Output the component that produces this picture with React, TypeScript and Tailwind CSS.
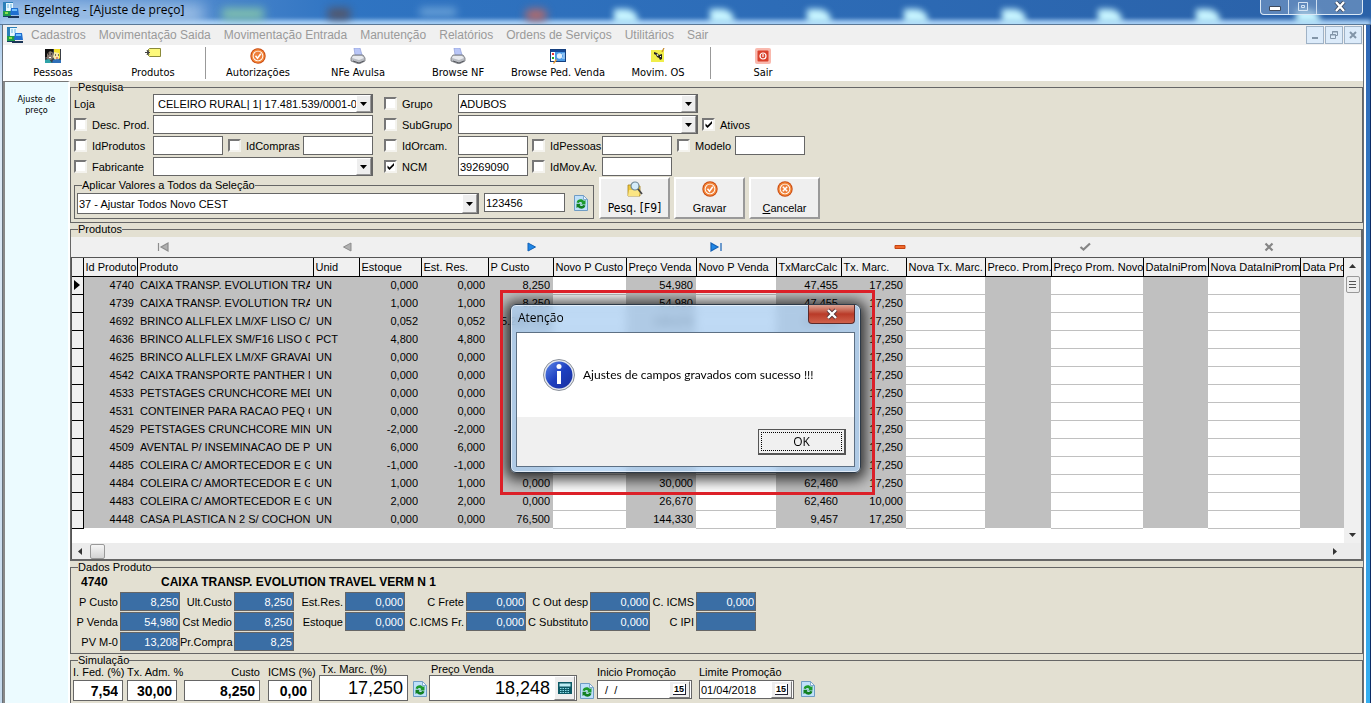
import type { ReactNode } from 'react';

type Column = {
  label: string;
  width: string;
  editable?: boolean;
  align?: 'right';
};

const COLUMNS: Column[] = [
  { label: 'Id Produto', width: 'w-[54px]', align: 'right' },
  { label: 'Produto', width: 'w-[176px]' },
  { label: 'Unid', width: 'w-[46px]' },
  { label: 'Estoque', width: 'w-[62px]', align: 'right' },
  { label: 'Est. Res.', width: 'w-[67px]', align: 'right' },
  { label: 'P Custo', width: 'w-[65px]', align: 'right' },
  { label: 'Novo P Custo', width: 'w-[73px]', editable: true },
  { label: 'Preço Venda', width: 'w-[70px]', align: 'right' },
  { label: 'Novo P Venda', width: 'w-[80px]', editable: true },
  { label: 'TxMarcCalc', width: 'w-[65px]', align: 'right' },
  { label: 'Tx. Marc.', width: 'w-[65px]', align: 'right' },
  { label: 'Nova Tx. Marc.', width: 'w-[79px]', editable: true },
  { label: 'Preco. Prom.', width: 'w-[66px]' },
  { label: 'Preço Prom. Novo', width: 'w-[92px]', editable: true },
  { label: 'DataIniProm', width: 'w-[65px]' },
  { label: 'Nova DataIniProm', width: 'w-[92px]', editable: true },
  { label: 'Data Prom.', width: '' },
];

// id, produto, unid, estoque, est. res., p custo, preço venda, tx calc, tx marc
const PRODUCTS = [
  ['4740', 'CAIXA TRANSP. EVOLUTION TRAVEL', 'UN', '0,000', '0,000', '8,250', '54,980', '47,455', '17,250'],
  ['4739', 'CAIXA TRANSP. EVOLUTION TRAVEL', 'UN', '1,000', '1,000', '8,250', '54,980', '47,455', '17,250'],
  ['4692', 'BRINCO ALLFLEX LM/XF LISO C/ 20', 'UN', '0,052', '0,052', '5.282,720', '128,670', '47,455', '17,250'],
  ['4636', 'BRINCO ALLFLEX SM/F16 LISO CX', 'PCT', '4,800', '4,800', '', '', '', '17,250'],
  ['4625', 'BRINCO ALLFLEX LM/XF GRAVADO', 'UN', '0,000', '0,000', '', '', '', '17,250'],
  ['4542', 'CAIXA TRANSPORTE PANTHER N 1', 'UN', '0,000', '0,000', '', '', '', '17,250'],
  ['4533', 'PETSTAGES CRUNCHCORE MEDIO', 'UN', '0,000', '0,000', '', '', '', '17,250'],
  ['4531', 'CONTEINER PARA RACAO PEQ C/', 'UN', '0,000', '0,000', '', '', '', '17,250'],
  ['4529', 'PETSTAGES CRUNCHCORE MINI', 'UN', '-2,000', '-2,000', '', '', '', '17,250'],
  ['4509', 'AVENTAL P/ INSEMINACAO DE PLAST', 'UN', '6,000', '6,000', '', '', '', '17,250'],
  ['4485', 'COLEIRA C/ AMORTECEDOR E GUIA', 'UN', '-1,000', '-1,000', '', '', '', '17,250'],
  ['4484', 'COLEIRA C/ AMORTECEDOR E GUIA', 'UN', '1,000', '1,000', '0,000', '30,000', '62,460', '17,250'],
  ['4483', 'COLEIRA C/ AMORTECEDOR E GUIA', 'UN', '2,000', '2,000', '0,000', '26,670', '62,460', '10,000'],
  ['4448', 'CASA PLASTICA N 2 S/ COCHONETE', 'UN', '0,000', '0,000', '76,500', '144,330', '9,457', '17,250'],
];

const MENU = [
  'Cadastros',
  'Movimentação Saida',
  'Movimentação Entrada',
  'Manutenção',
  'Relatórios',
  'Ordens de Serviços',
  'Utilitários',
  'Sair',
];

const DETAILS: [string, string][][] = [
  [['P Custo', '8,250'], ['Ult.Custo', '8,250'], ['Est.Res.', '0,000'], ['C Frete', '0,000'], ['C Out desp', '0,000'], ['C. ICMS', '0,000']],
  [['P Venda', '54,980'], ['Cst Medio', '8,250'], ['Estoque', '0,000'], ['C.ICMS Fr.', '0,000'], ['C Substituto', '0,000'], ['C IPI', '']],
  [['PV M-0', '13,208'], ['Pr.Compra', '8,25']],
];

/* ---------- icons ---------- */

function AppIcon() {
  return (
    <svg className="w-4 h-4 shrink-0" viewBox="0 0 16 16">
      <path d="M0 0h10v9H0z" fill="#2b7fb8" />
      <rect x="3" y="1" width="7" height="8" fill="#e6f7ff" />
      <path d="M4 3h2M7 3h2M4 5h2M7 5h2" stroke="#69b4e0" strokeWidth="1" />
      <path d="M0 9h8v5H0z" fill="#1f9a4a" />
      <path d="M2 10h3v2H2z" fill="#8be04a" />
      <path d="M8 6h7l1 7H7z" fill="#1f6fd0" />
      <path d="M9 7h5v2H9z" fill="#6fc0ff" />
      <path d="M5 14h11v2H5z" fill="#1b3456" />
      <path d="M0 14h5v1H0z" fill="#123f66" />
    </svg>
  );
}

function PeopleIcon() {
  return (
    <svg className="w-4 h-4" viewBox="0 0 16 16">
      <rect y="1" width="16" height="14" fill="#3a3f46" />
      <path d="M1 6c0-4 7-4 7 0v4l-2 2H3L1 9z" fill="#8a7a70" />
      <path d="M0 1h8v3L5 3 2 6v3H0z" fill="#111" />
      <path d="M9 4c1-3 6-3 6 0v5l-2 3h-3L8 9z" fill="#f7e9b0" />
      <path d="M9 1h6v9l-1 1V5l-5-1z" fill="#f5e12c" />
      <path d="M0 12l4-1 3 4H0z" fill="#2fa3a8" />
      <path d="M8 12l4-1 4 1v3H7z" fill="#2f6fb8" />
      <path d="M3 6h1M6 6h1M10 7h1M13 7h1" stroke="#000" />
      <path d="M4 9.500h2" stroke="#fff" />
      <path d="M11 10h2" stroke="#d8362c" />
    </svg>
  );
}

function TagIcon() {
  return (
    <svg className="w-4 h-4" viewBox="0 0 16 16">
      <path d="M4.500.500h11v8h-11l-2-2v-4z" fill="#fdf97a" stroke="#8b8a3a" />
      <path d="M0 4.500h5M2 2l2 5M2 7l2-5" stroke="#444" strokeWidth="1" fill="none" />
    </svg>
  );
}

function CheckBadgeIcon({ cross = false }: { cross?: boolean }) {
  return (
    <svg className="w-4 h-4" viewBox="0 0 16 16">
      <circle cx="8" cy="8" r="7.700" fill="#c9490f" />
      <circle cx="8" cy="8" r="6.700" fill="#f58a3c" />
      <circle cx="8" cy="8" r="5.300" fill="#fff" />
      <circle cx="8" cy="8" r="4.400" fill="#ee7f3a" />
      {cross ? (
        <path d="M5.800 5.800l4.400 4.400M10.200 5.800l-4.400 4.400" stroke="#fff" strokeWidth="1.500" />
      ) : (
        <path d="M5.500 7.800l2 2.400 3.300-4.400" stroke="#fff" strokeWidth="1.500" fill="none" />
      )}
    </svg>
  );
}

function PrinterIcon() {
  return (
    <svg className="w-4 h-4" viewBox="0 0 16 16">
      <path d="M4 0h6l2 7H5z" fill="#b9c6f7" stroke="#8f9ed8" strokeWidth=".7" />
      <path d="M3 7h10l2 3v3l-6 3-8-3v-3z" fill="#b9bcc2" stroke="#73767c" strokeWidth=".8" />
      <path d="M3 8h9l2 2-5 2-7-2z" fill="#e8eaee" />
      <path d="M3 13l6 2 5-2" stroke="#55585e" strokeWidth="1" fill="none" />
    </svg>
  );
}

function BrowseIcon() {
  return (
    <svg className="w-4 h-4" viewBox="0 0 16 16">
      <rect x=".5" y="1.500" width="15" height="12" fill="#4a9ae6" stroke="#16407f" />
      <path d="M1 2h14v2H1z" fill="#174a98" />
      <rect x="1" y="4" width="4" height="9" fill="#fff" />
      <path d="M2 5h2v2H2z" fill="#e33" />
      <path d="M2 9h2v2H2z" fill="#2a2" />
      <circle cx="9.500" cy="8" r="2.700" fill="#dff0ff" />
      <path d="M12 6h3M13 8h2M12 10h3" stroke="#c9e4ff" />
      <path d="M3 15l3-4 1 1-3 4z" fill="#f0a030" />
    </svg>
  );
}

function NoteIcon() {
  return (
    <svg className="w-4 h-4" viewBox="0 0 16 16">
      <path d="M1 2h13v12H1z" fill="#f0ee4a" />
      <path d="M4 4l3 1 2 2 3-1v5l-2 1-1-2-2-1-1-2-2-1z" fill="#222" />
      <path d="M7 6l1 2M10 8l1 1" stroke="#fff" />
      <path d="M12 4l2-4" stroke="#c58b2a" strokeWidth="1.200" />
    </svg>
  );
}

function PowerIcon() {
  return (
    <svg className="w-4 h-4" viewBox="0 0 16 16">
      <rect width="16" height="16" rx="2" fill="#f9b9ae" />
      <rect x="2.500" y="2.500" width="11" height="11" rx="1" fill="#d9412c" />
      <circle cx="8" cy="8" r="3" fill="none" stroke="#fff" strokeWidth="1.200" />
      <path d="M8 6v3" stroke="#fff" strokeWidth="1.200" />
    </svg>
  );
}

function SearchFolderIcon() {
  return (
    <svg className="w-4 h-4" viewBox="0 0 16 16">
      <path d="M1 4h4l1 1h7v10H1z" fill="#f0c93c" stroke="#a8861c" strokeWidth=".8" />
      <path d="M2 9h11l-1 6H1z" fill="#fbe583" />
      <circle cx="8" cy="5" r="4" fill="#d4ecfa" stroke="#6f8896" strokeWidth="1.200" />
      <path d="M11 8l4 5" stroke="#444" strokeWidth="1.800" />
    </svg>
  );
}

function RefreshButton({ label }: { label: string }) {
  return (
    <button type="button" aria-label={label} className="shrink-0">
      <svg className="w-[14px] h-4" viewBox="0 0 14 16">
        <path d="M.5.500h9l4 4v11H.5z" fill="#bfe0fb" stroke="#6f9cc4" />
        <path d="M9.500.500v4h4z" fill="#eef7ff" stroke="#6f9cc4" strokeWidth=".8" />
        <path d="M2.500 7.500c1-4 6-4 7.500-1.500l1.500-1V9.500H7l1.300-1.400C7 6.800 5.400 6.800 4.800 8z" fill="#1d9a2c" />
        <path d="M11.500 10.500c-1 4-6 4-7.500 1.500l-1.500 1V8.800h4.300L5.700 10.200c1.300 1.200 2.900 1 3.500-.2z" fill="#128022" />
      </svg>
    </button>
  );
}

const NAV_ITEMS: { label: string; icon: ReactNode }[] = [
  { label: 'Primeiro', icon: <path d="M1.500 2v8M11 2v8L4 6z" fill="#b0b0b0" stroke="#8d8d8d" strokeWidth="1.200" /> },
  { label: 'Anterior', icon: <path d="M10 2v8L2.500 6z" fill="#b0b0b0" stroke="#8d8d8d" /> },
  { label: 'Próximo', icon: <path d="M2 2v8L9.500 6z" fill="#1e86e6" stroke="#1461b5" /> },
  { label: 'Último', icon: <path d="M1 2v8l7-4zM11 2v8" fill="#1e86e6" stroke="#1461b5" strokeWidth="1.200" /> },
  { label: 'Excluir', icon: <path d="M1 4.500h10v3H1z" fill="#f0682a" stroke="#c44412" /> },
  { label: 'Confirmar', icon: <path d="M1.500 6l3 2.500L11 2.500" fill="none" stroke="#858585" strokeWidth="2.200" /> },
  { label: 'Cancelar', icon: <path d="M2.500 2.500l7 7M9.500 2.500l-7 7" fill="none" stroke="#858585" strokeWidth="2.200" /> },
];

/* ---------- form controls ---------- */

type ComboProps = { label: string; value: string; className: string; indent?: boolean };

function Combo({ label, value, className, indent }: ComboProps) {
  return (
    <span className={`flex border border-[#666] border-r-2 bg-white ${className}`}>
      <select
        aria-label={label}
        className={`flex-1 min-w-0 appearance-none bg-white outline-none ${indent ? 'pl-1' : 'pl-px'}`}
        defaultValue={value}
      >
        <option value={value}>{value}</option>
      </select>
      <span className="flex w-[15px] shrink-0 items-center justify-center border border-l-white border-t-white border-r-[#999] border-b-[#999] bg-[#eee] pointer-events-none">
        <svg className="w-[7px] h-1" viewBox="0 0 7 4">
          <path d="M0 0h7L3.500 4z" fill="#000" />
        </svg>
      </span>
    </span>
  );
}

function Field({ label, value = '', className = 'w-[70px]' }: { label: string; value?: string; className?: string }) {
  return (
    <input
      type="text"
      aria-label={label}
      defaultValue={value}
      className={`h-[19px] shrink-0 border border-[#666] bg-white px-px outline-none ${className}`}
    />
  );
}

function Check({ label, checked = false, className }: { label: string; checked?: boolean; className: string }) {
  return (
    <label className={`flex shrink-0 items-center whitespace-nowrap ${className}`}>
      <span className="relative mr-[5px] flex h-[13px] w-[13px]">
        <input
          type="checkbox"
          defaultChecked={checked}
          className="peer h-[13px] w-[13px] appearance-none border-2 border-t-[#777] border-l-[#777] border-r-[#f4f3ee] border-b-[#f4f3ee] bg-white"
        />
        <svg className="pointer-events-none absolute inset-0 hidden peer-checked:block" viewBox="0 0 13 13">
          <path d="M3.500 5.500v2.500l2 2 4.500-4.500V3L5.500 7.500z" fill="#000" />
        </svg>
      </span>
      {label}
    </label>
  );
}

function Group({ title, className, children }: { title: string; className: string; children: ReactNode }) {
  return (
    <fieldset className={`min-w-0 border border-[#666] ${className}`}>
      <legend className="ml-[7px] h-3 leading-3">{title}</legend>
      {children}
    </fieldset>
  );
}

function ActionButton({ icon, children }: { icon: ReactNode; children: ReactNode }) {
  return (
    <button
      type="button"
      className="flex h-[42px] w-[71px] flex-col items-center justify-center gap-1 border-2 border-t-white border-l-white border-r-[#999] border-b-[#999] bg-[#efefef] leading-[14px]"
    >
      {icon}
      <span>{children}</span>
    </button>
  );
}

function ToolButton({ icon, label }: { icon: ReactNode; label: string }) {
  return (
    <button type="button" className="flex w-[100px] shrink-0 flex-col items-center gap-px pt-[3px]">
      {icon}
      <span className="leading-[15px] whitespace-nowrap">{label}</span>
    </button>
  );
}

/* ---------- sections ---------- */

function TitleBar() {
  return (
    <header className="relative flex h-[25px] shrink-0 items-start overflow-hidden border-b border-[#5a7896] bg-gradient-to-r from-[#6f9fd8] via-[#2f74c2] via-25% to-[#2a61a8]">
      <div className="absolute inset-x-0 -bottom-1 h-2 bg-[#a9d0f5] blur-[2px]" />
      <div className="absolute -left-4 top-1 h-5 w-[220px] bg-[#b4d0ee] opacity-80 blur-[8px]" />
      <div className="absolute left-[222px] top-2 h-3 w-[42px] bg-[#8fd0a8] opacity-80 blur-[5px]" />
      <div className="absolute left-[328px] top-2 h-3 w-[22px] bg-[#5b5058] opacity-80 blur-[4px]" />
      <div className="absolute left-[420px] top-2 h-2 w-[36px] bg-[#7fb2e0] opacity-80 blur-[4px]" />
      <div className="absolute left-[525px] top-[9px] h-3 w-[22px] rounded-full bg-[#b06a6c] blur-[4px]" />
      {['left-[614px]', 'left-[710px]', 'left-[807px]', 'left-[904px]', 'left-[1002px]', 'left-[1098px]', 'left-[1196px]', 'left-[1296px]'].map(pos => (
        <div key={pos} className={`absolute top-[9px] h-[14px] w-6 rounded-tr-xl bg-[#c6f4ff] blur-[3px] ${pos}`} />
      ))}
      <div className="relative flex flex-1 items-center gap-[5px] pt-[2px] pl-[3px]">
        <AppIcon />
        <h1 className="font-[Open_Sans,sans-serif] text-[12px] leading-4 text-black">EngeInteg - [Ajuste de preço]</h1>
      </div>
      <div className="relative mr-2 flex h-[15px] w-[103px] rounded-b-[4px] border border-t-0 border-[#dbe9f6] bg-[#7f9fc6]/60">
        <button type="button" aria-label="Minimizar" className="flex w-7 items-center justify-center border-r border-[#cfdff0]">
          <svg className="w-3 h-3" viewBox="0 0 12 12"><path d="M.5 5.500h11v4H.5z" fill="#fff" stroke="#3f4a5c" /></svg>
        </button>
        <button type="button" aria-label="Restaurar" className="flex w-7 items-center justify-center border-r border-[#cfdff0]">
          <svg className="w-3 h-3" viewBox="0 0 12 12"><path d="M1.500 1.500h9v8h-9zM4.500 4.500h3v2h-3z" fill="none" stroke="#d4e4f4" /></svg>
        </button>
        <button type="button" aria-label="Fechar" className="flex flex-1 items-center justify-center">
          <svg className="w-3 h-3" viewBox="0 0 12 12">
            <path d="M2 1l8 9M10 1l-8 9" stroke="#39455a" strokeWidth="4" />
            <path d="M2 1l8 9M10 1l-8 9" stroke="#fff" strokeWidth="2.400" />
          </svg>
        </button>
      </div>
    </header>
  );
}

function MenuBar() {
  return (
    <nav className="flex h-5 shrink-0 items-center bg-[#f0f0f0] pl-1 text-[12px] text-[#9a9a9a]">
      <AppIcon />
      <div className="ml-2 flex flex-1 gap-[13px]">
        {MENU.map(item => (
          <button key={item} type="button" className="whitespace-nowrap">{item}</button>
        ))}
      </div>
      <div className="flex gap-px pr-px text-[#8295a8]">
        <button type="button" aria-label="Minimizar janela" className="h-[18px] w-[18px] border border-[#9fb2c6] bg-[#dcebfa]">
          <svg viewBox="0 0 16 16"><path d="M5 11h6" stroke="currentColor" strokeWidth="2" /></svg>
        </button>
        <button type="button" aria-label="Restaurar janela" className="h-[18px] w-[18px] border border-[#9fb2c6] bg-[#dcebfa]">
          <svg viewBox="0 0 16 16"><path d="M6.500 7V4.500h5v4H10M6 5h6M4.500 7.500h5v4h-5zM4 8h6" fill="none" stroke="currentColor" /></svg>
        </button>
        <button type="button" aria-label="Fechar janela" className="h-[18px] w-[18px] border border-[#9fb2c6] bg-[#dcebfa]">
          <svg viewBox="0 0 16 16"><path d="M5 5l6 6M11 5l-6 6" stroke="currentColor" strokeWidth="2" /></svg>
        </button>
      </div>
    </nav>
  );
}

function Toolbar() {
  return (
    <div className="flex h-9 shrink-0 bg-white font-[DejaVu_Sans_Condensed,Noto_Sans,sans-serif] text-[11px]">
      <ToolButton icon={<PeopleIcon />} label="Pessoas" />
      <ToolButton icon={<TagIcon />} label="Produtos" />
      <div className="mx-[2px] my-[2px] w-px bg-[#999]" />
      <ToolButton icon={<CheckBadgeIcon />} label="Autorizações" />
      <ToolButton icon={<PrinterIcon />} label="NFe Avulsa" />
      <ToolButton icon={<PrinterIcon />} label="Browse NF" />
      <ToolButton icon={<BrowseIcon />} label="Browse Ped. Venda" />
      <ToolButton icon={<NoteIcon />} label="Movim. OS" />
      <div className="mx-[2px] my-[2px] w-px bg-[#999]" />
      <ToolButton icon={<PowerIcon />} label="Sair" />
    </div>
  );
}

function SearchPanel() {
  return (
    <Group title="Pesquisa" className="h-[142px] shrink-0">
      <div className="flex flex-col gap-[2px] pl-[3px] pt-px">
        <div className="flex h-[19px] items-center">
          <span className="w-[79px]">Loja</span>
          <Combo label="Loja" value="CELEIRO RURAL| 1| 17.481.539/0001-0" className="h-[19px] w-[220px]" indent />
          <Check label="Grupo" className="ml-[11px] w-[74px]" />
          <Combo label="Grupo" value="ADUBOS" className="h-[19px] w-[240px]" />
        </div>
        <div className="flex h-[19px] items-center">
          <Check label="Desc. Prod." className="w-[79px]" />
          <Field label="Desc. Prod." className="w-[220px]" />
          <Check label="SubGrupo" className="ml-[11px] w-[74px]" />
          <Combo label="SubGrupo" value="" className="h-[19px] w-[240px]" />
          <Check label="Ativos" checked className="ml-1 w-[74px]" />
        </div>
        <div className="flex h-[19px] items-center">
          <Check label="IdProdutos" className="w-[79px]" />
          <Field label="IdProdutos" />
          <Check label="IdCompras" className="ml-[5px] w-[75px]" />
          <Field label="IdCompras" />
          <Check label="IdOrcam." className="ml-[11px] w-[74px]" />
          <Field label="IdOrcam." />
          <Check label="IdPessoas" className="ml-1 w-[70px]" />
          <Field label="IdPessoas" />
          <Check label="Modelo" className="ml-[5px] w-[58px]" />
          <Field label="Modelo" />
        </div>
        <div className="flex h-[19px] items-center">
          <Check label="Fabricante" className="w-[79px]" />
          <Combo label="Fabricante" value="" className="h-[19px] w-[220px]" />
          <Check label="NCM" checked className="ml-[11px] w-[74px]" />
          <Field label="NCM" value="39269090" />
          <Check label="IdMov.Av." className="ml-1 w-[70px]" />
          <Field label="IdMov.Av." />
        </div>
      </div>
      <div className="flex items-end pl-[3px] pt-px">
        <Group title="Aplicar Valores a Todos da Seleção" className="h-10 w-[520px]">
          <div className="flex items-start gap-[5px] pl-[2px] pt-[2px]">
            <Combo label="Campo" value="37 - Ajustar Todos Novo CEST" className="h-[21px] w-[402px]" />
            <Field label="Valor" value="123456" className="w-[81px]" />
            <span className="mt-[2px] ml-1 flex"><RefreshButton label="Aplicar valores" /></span>
          </div>
        </Group>
        <div className="ml-[5px] flex gap-1">
          <ActionButton icon={<SearchFolderIcon />}>
            <span className="font-[DejaVu_Sans_Condensed,Noto_Sans,sans-serif] text-[12px]">Pesq. [F9]</span>
          </ActionButton>
          <ActionButton icon={<CheckBadgeIcon />}>Gravar</ActionButton>
          <ActionButton icon={<CheckBadgeIcon cross />}><u>C</u>ancelar</ActionButton>
        </div>
      </div>
    </Group>
  );
}

function ProductGrid() {
  return (
    <Group title="Produtos" className="h-[338px] shrink-0 border-r-2 border-b-2">
      <div className="mt-[2px] flex h-5 bg-[#f0f0f0]">
        {NAV_ITEMS.map(item => (
          <button key={item.label} type="button" aria-label={item.label} className="flex flex-1 items-center justify-center">
            <svg className="w-3 h-3" viewBox="0 0 12 12">{item.icon}</svg>
          </button>
        ))}
      </div>
      <div className="flex h-[286px] border-t border-l border-[#555] bg-white">
        <div className="min-w-0 flex-1 overflow-hidden">
          <table className="w-full table-fixed border-collapse">
            <thead>
              <tr className="h-[18px] bg-[#f0f0f0]">
                <th className="w-[11px] border-r border-b border-black p-0" aria-label="Registro" />
                {COLUMNS.map(col => (
                  <th
                    key={col.label}
                    className={`overflow-hidden border-r border-b border-black p-0 pl-[2px] text-left font-normal whitespace-nowrap ${col.width}`}
                  >
                    {col.label}
                  </th>
                ))}
              </tr>
            </thead>
            <tbody>
              {PRODUCTS.map((row, i) => {
                let next = 0;
                return (
                  <tr key={row[0]} className="h-[18px]">
                    <td className="border-r border-b border-black bg-[#f0f0f0] p-0">
                      {i === 0 && (
                        <svg className="ml-[2px] h-[10px] w-[7px]" viewBox="0 0 7 10"><path d="M0 0l6 5-6 5z" /></svg>
                      )}
                    </td>
                    {COLUMNS.map((col, c) => {
                      if (col.editable) {
                        return <td key={col.label} className="border-b border-[#c0c0c0] bg-white p-0" />;
                      }
                      const text = c < 11 ? row[next++] : '';
                      return (
                        <td
                          key={col.label}
                          className={`overflow-hidden bg-[#c0c0c0] p-0 px-[3px] whitespace-nowrap ${col.align === 'right' ? 'text-right' : ''}`}
                        >
                          <div className="overflow-hidden">{text}</div>
                        </td>
                      );
                    })}
                  </tr>
                );
              })}
            </tbody>
          </table>
        </div>
        <div className="flex w-[17px] flex-col items-center bg-[#f0f0f0]">
          <svg className="mt-[6px] h-1 w-[7px]" viewBox="0 0 7 4"><path d="M0 4h7L3.500 0z" fill="#333" /></svg>
          <div className="mt-2 flex h-[17px] w-[14px] flex-col items-center justify-center gap-[2px] rounded-[2px] border border-[#999] bg-[#eee]">
            <i className="h-px w-[7px] bg-[#555]" />
            <i className="h-px w-[7px] bg-[#555]" />
            <i className="h-px w-[7px] bg-[#555]" />
          </div>
          <svg className="mt-auto mb-[6px] h-1 w-[7px]" viewBox="0 0 7 4"><path d="M0 0h7L3.500 4z" fill="#333" /></svg>
        </div>
      </div>
      <div className="flex h-4 items-center border-l border-[#555] bg-[#ececec] pl-[6px] pr-6">
        <svg className="h-[7px] w-1" viewBox="0 0 4 7"><path d="M4 0v7L0 3.500z" fill="#333" /></svg>
        <div className="ml-2 h-[15px] w-[15px] rounded-[2px] border border-[#999] bg-gradient-to-b from-[#f6f6f6] to-[#d4d4d4]" />
        <svg className="ml-auto h-[7px] w-1" viewBox="0 0 4 7"><path d="M0 0v7l4-3.500z" fill="#333" /></svg>
      </div>
    </Group>
  );
}

function ProductDetails() {
  return (
    <Group title="Dados Produto" className="h-[93px] shrink-0">
      <div className="flex h-[18px] items-center pl-[10px] text-[12px] font-bold">
        <span className="w-20">4740</span>
        <span>CAIXA TRANSP. EVOLUTION TRAVEL VERM N 1</span>
      </div>
      <div className="grid auto-rows-[19px] grid-cols-[49px_60px_54px_60px_51px_60px_61px_60px_64px_60px_46px_60px] gap-y-px pt-px">
        {DETAILS.flat().map(([label, value]) => (
          <label key={label} className="contents">
            <span className="self-center pr-[2px] text-right whitespace-nowrap">{label}</span>
            <input
              type="text"
              readOnly
              defaultValue={value}
              className="h-[19px] w-full border border-[#666] bg-[#3a6ea5] px-px text-right text-white outline-none"
            />
          </label>
        ))}
      </div>
    </Group>
  );
}

function SimField({ label, value, box, right }: { label: string; value: string; box: string; right?: boolean }) {
  return (
    <label className={`flex flex-col gap-[2px] leading-3 whitespace-nowrap ${right ? 'items-end' : ''} ${box}`}>
      <span>{label}</span>
      <input
        type="text"
        defaultValue={value}
        className="h-[21px] w-full border border-[#666] bg-white px-1 text-right text-[14px] font-bold outline-none"
      />
    </label>
  );
}

function DateField({ label, value }: { label: string; value: string }) {
  return (
    <label className="flex w-[95px] flex-col gap-[2px] leading-3 whitespace-nowrap">
      <span>{label}</span>
      <span className="flex h-[19px] border border-[#666] bg-white pr-px">
        <input type="text" defaultValue={value} className="w-0 flex-1 px-px whitespace-pre outline-none" />
        <button
          type="button"
          aria-label={`Calendário ${label}`}
          className="flex w-[21px] items-center justify-center border border-t-white border-l-white border-r-[#777] border-b-[#777] bg-[#eee]"
        >
          <span className="border-r border-b border-[#223] bg-white px-px text-[9px] leading-[10px] font-bold">15</span>
        </button>
      </span>
    </label>
  );
}

function Simulation() {
  return (
    <Group title="Simulação" className="shrink-0 pb-3">
      <div className="-mt-[3px] flex items-end pl-[2px]">
        <SimField label="I. Fed. (%)" value="7,54" box="w-[50px]" />
        <SimField label="Tx. Adm. %" value="30,00" box="ml-1 w-[50px]" />
        <SimField label="Custo" value="8,250" box="ml-[7px] w-[76px]" right />
        <SimField label="ICMS (%)" value="0,00" box="ml-2 w-[44px]" />
        <label className="ml-[7px] flex w-[89px] flex-col leading-3">
          <span className="pl-[2px]">Tx. Marc. (%)</span>
          <input type="text" defaultValue="17,250" className="h-[26px] w-full border border-[#666] bg-white px-1 text-right text-[18px] outline-none" />
        </label>
        <span className="mb-1 ml-[5px] flex"><RefreshButton label="Recalcular margem" /></span>
        <label className="ml-[2px] flex w-[148px] flex-col leading-3">
          <span className="pl-[2px]">Preço Venda</span>
          <span className="flex h-[26px] border border-[#666] bg-white pr-px">
            <input type="text" defaultValue="18,248" className="w-0 flex-1 px-1 text-right text-[18px] outline-none" />
            <button type="button" aria-label="Calculadora" className="flex w-[21px] items-center justify-center border border-t-white border-l-white border-r-[#888] border-b-[#888] bg-[#eee]">
              <svg className="h-3 w-[14px]" viewBox="0 0 14 12">
                <rect width="14" height="12" fill="#0d5a66" />
                <rect x="1.500" y="1.500" width="11" height="3" fill="#bdeef5" />
                <path d="M2 6.500h10M2 8.500h10M2 10.500h10" stroke="#8ddbe6" strokeDasharray="1.500 1" />
              </svg>
            </button>
          </span>
        </label>
        <span className="mb-[2px] ml-[3px] flex"><RefreshButton label="Recalcular preço" /></span>
        <div className="mb-[2px] ml-[3px] flex gap-[7px]">
          <DateField label="Inicio Promoção" value="  /  /" />
          <DateField label="Limite Promoção" value="01/04/2018" />
        </div>
        <span className="mb-1 ml-[7px] flex"><RefreshButton label="Aplicar promoção" /></span>
      </div>
    </Group>
  );
}

function MessageDialog() {
  return (
    <div className="absolute top-[290px] left-[500px] flex h-[205px] w-[375px] items-center justify-center overflow-hidden border-[3px] border-[#dc2028] pr-1 pb-2">
      <div
        role="dialog"
        aria-labelledby="dialog-title"
        className="flex h-[169px] w-[351px] shrink-0 flex-col rounded-[6px] border border-[#2d3a48] bg-[#a9cdf2]/75 px-[5px] pb-[5px] shadow-[0_2px_14px_5px_rgba(0,0,0,0.75)] ring-1 ring-white/60 ring-inset backdrop-blur-[4px]"
      >
        <div className="flex h-[27px] shrink-0 items-start justify-between pl-[2px]">
          <h2 id="dialog-title" className="pt-[5px] font-[Open_Sans,sans-serif] text-[12px] leading-4">Atenção</h2>
          <button
            type="button"
            aria-label="Fechar aviso"
            className="flex h-[19px] w-[47px] items-center justify-center rounded-b-[4px] border border-t-0 border-[#5b2a2a] bg-gradient-to-b from-[#dba394] via-[#b93a28] via-50% to-[#d0614c]"
          >
            <svg className="w-3 h-3" viewBox="0 0 12 12">
              <path d="M2 2l8 8M10 2l-8 8" stroke="#54343a" strokeWidth="4" />
              <path d="M2 2l8 8M10 2l-8 8" stroke="#fff" strokeWidth="2.400" />
            </svg>
          </button>
        </div>
        <div className="flex flex-1 flex-col border border-[#5d7084] bg-[#f0f0f0]">
          <div className="flex h-[84px] items-center gap-2 bg-white pl-[26px]">
            <svg className="h-8 w-8 shrink-0" viewBox="0 0 32 32">
              <defs>
                <linearGradient id="info" x1="0" y1="0" x2="1" y2="1">
                  <stop offset="0" stopColor="#5b86e8" />
                  <stop offset=".5" stopColor="#1d3fc0" />
                  <stop offset="1" stopColor="#1a2f9c" />
                </linearGradient>
              </defs>
              <circle cx="16" cy="16" r="15.500" fill="#e4e8ee" stroke="#8b9099" />
              <circle cx="16" cy="16" r="13.500" fill="url(#info)" />
              <circle cx="16" cy="7.500" r="2.500" fill="#fff" />
              <path d="M14 12h4v13h-4z" fill="#fff" />
            </svg>
            <p className="font-[Lato,sans-serif] text-[12px] whitespace-nowrap">Ajustes de campos gravados com sucesso !!!</p>
          </div>
          <div className="flex flex-1 items-start justify-end pt-3 pr-2">
            <button
              type="button"
              className="h-[26px] w-[88px] border border-t-[#555] border-l-[#555] border-r-2 border-b-2 border-r-[#555] border-b-[#555] bg-[#f0f0f0] p-[2px] font-[Open_Sans,sans-serif] text-[12px]"
            >
              <span className="flex h-full items-center justify-center border border-dotted border-black">OK</span>
            </button>
          </div>
        </div>
      </div>
    </div>
  );
}

export default function App() {
  return (
    <div className="relative flex h-screen flex-col overflow-hidden bg-[#e3e0d2] font-[Liberation_Sans,Arial,sans-serif] text-[11px] leading-[14px] text-black">
      <TitleBar />
      <div className="flex min-h-0 flex-1">
        <div className="w-[3px] shrink-0 border-r border-[#666f78] bg-gradient-to-b from-[#9cc4ea] via-[#dfeaf5] via-10% to-[#c5d9ec]" />
        <div className="flex min-w-0 flex-1 flex-col">
          <MenuBar />
          <Toolbar />
          <div className="flex min-h-0 flex-1">
            <aside className="w-[67px] shrink-0 border-t border-l-2 border-t-[#777] border-l-[#888] border-r-2 border-r-white bg-[#ecfbff] px-2 pt-3 text-center font-[DejaVu_Sans_Condensed,Noto_Sans,sans-serif] text-[9px] leading-[11px]">
              Ajuste de preço
            </aside>
            <main className="flex min-w-0 flex-1 flex-col">
              <SearchPanel />
              <ProductGrid />
              <ProductDetails />
              <Simulation />
            </main>
          </div>
        </div>
        <div className="flex w-2 shrink-0 border-l border-[#666f78]">
          <div className="w-[2px] bg-white" />
          <div className="flex-1 border-r border-[#0c2c66] bg-gradient-to-b from-[#2f66b4] to-[#35b0f2]" />
        </div>
      </div>
      <MessageDialog />
    </div>
  );
}
